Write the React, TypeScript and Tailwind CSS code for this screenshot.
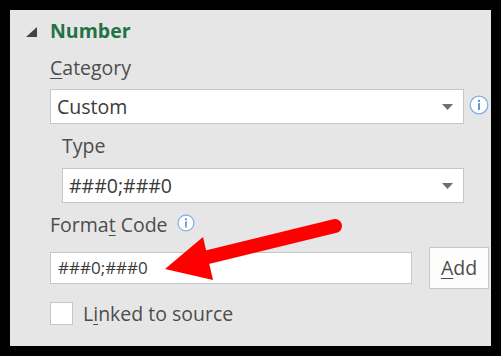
import type { ReactNode } from 'react';

function InfoIcon({ className = '' }: { className?: string }) {
  return (
    <svg viewBox="0 0 20 20" className={className} aria-hidden>
      <circle cx="10" cy="10" r="8.8" fill="#ffffff" stroke="#86afe0" strokeWidth="1.3" />
      <circle cx="10" cy="5.8" r="1.1" fill="#3f7fcf" />
      <rect x="9.2" y="8.2" width="1.6" height="6.8" fill="#3f7fcf" />
    </svg>
  );
}

function Caret() {
  return (
    <svg viewBox="0 0 11 6" className="h-[6px] w-[11px]" aria-hidden>
      <polygon points="0,0 11,0 5.5,6" fill="#6f6f6f" />
    </svg>
  );
}

function Select({ value }: { value: string }) {
  return (
    <div className="flex h-[35px] items-center justify-between border border-[#c6c6c6] bg-white pl-[6px] pr-[10px]">
      <span className="text-[19.5px] text-[#3a3a3a]">{value}</span>
      <Caret />
    </div>
  );
}

function Label({ children, className = '' }: { children: ReactNode; className?: string }) {
  return <div className={`h-[24px] text-[19.5px] leading-[24px] text-[#4d4d4d] ${className}`}>{children}</div>;
}

export default function App() {
  return (
    <div className="relative h-[356px] w-[501px] bg-black p-[10px] font-['Open_Sans','Noto_Sans',sans-serif]">
      <div className="h-full w-full bg-[#e6e6e6] pl-[40px] pr-[2px] pt-[8px]">
        <div className="-ml-[24px] flex h-[26px] items-center gap-[13px]">
          <svg viewBox="0 0 11 10" className="mt-[2px] h-[10px] w-[11px]" aria-hidden>
            <polygon points="11,0 11,10 0,10" fill="#444444" />
          </svg>
          <span className="text-[19.5px] font-bold leading-[26px] text-[#217346]">Number</span>
        </div>

        <Label className="mt-[12px]">
          <span className="underline decoration-1 underline-offset-[3px]">C</span>ategory
        </Label>

        <div className="mt-[9px] flex items-center gap-[5px]">
          <div className="w-[414px]">
            <Select value="Custom" />
          </div>
          <InfoIcon className="-mt-[4px] h-[20px] w-[20px]" />
        </div>

        <div className="pl-[12px]">
          <Label className="mt-[10px]">Type</Label>
          <div className="mt-[10px] w-[402px]">
            <Select value="###0;###0" />
          </div>
        </div>

        <div className="mt-[10px] flex items-center gap-[9px]">
          <Label>
            Forma<span className="underline decoration-1 underline-offset-[3px]">t</span> Code
          </Label>
          <InfoIcon className="-mt-[5px] h-[18px] w-[18px]" />
        </div>

        <div className="mt-[10px] flex items-center gap-[17px]">
          <div className="flex h-[32px] w-[362px] items-center border border-[#c6c6c6] bg-white pl-[7px]">
            <span className="text-[17px] text-[#3a3a3a]">###0;###0</span>
          </div>
          <button className="flex h-[42px] w-[60px] items-center justify-center border border-[#c6c6c6] bg-[#fdfdfd] text-[19.5px] text-[#4d4d4d]">
            <span className="underline decoration-1 underline-offset-[3px]">A</span>dd
          </button>
        </div>

        <div className="mt-[10px] flex items-center gap-[10px]">
          <div className="h-[23px] w-[23px] border border-[#c6c6c6] bg-white" />
          <span className="text-[19.5px] text-[#4d4d4d]">
            L<span className="underline decoration-1 underline-offset-[3px]">i</span>nked to source
          </span>
        </div>
      </div>

      <svg className="pointer-events-none absolute left-0 top-0 h-[356px] w-[501px]" viewBox="0 0 501 356" aria-hidden>
        <line x1="335" y1="226" x2="200" y2="259" stroke="#ff0000" strokeWidth="14" strokeLinecap="round" />
        <polygon points="165,269 203,237 213,280" fill="#ff0000" />
      </svg>
    </div>
  );
}
